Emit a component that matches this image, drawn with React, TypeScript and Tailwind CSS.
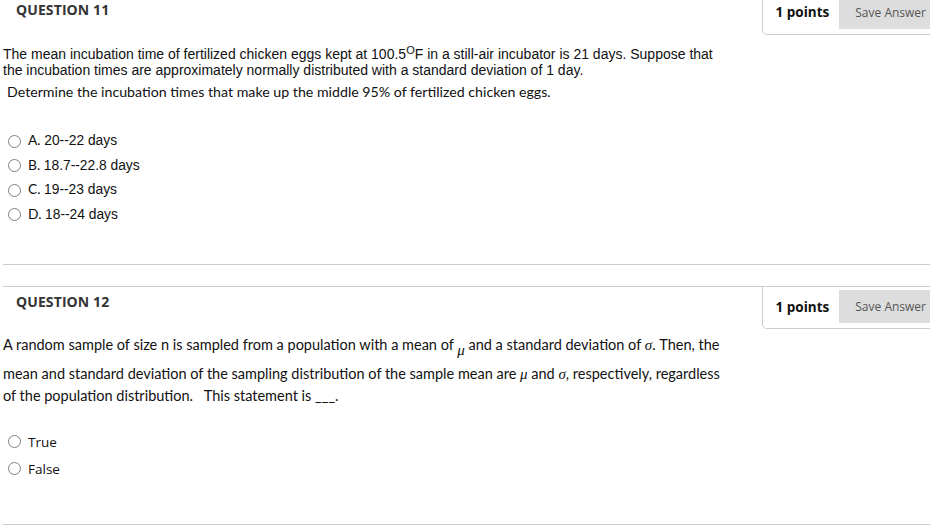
import React from 'react';

const openSans = { fontFamily: '"Open Sans", "Liberation Sans", sans-serif' };

const PointsBox: React.FC = () => (
  <div className="flex items-center border-x border-b border-[#cccccc] rounded-bl-[5px] pt-[3px] pb-[5px] pl-[13px] pr-[4px] bg-white">
    <span className="font-['Open_Sans',sans-serif] font-bold text-[13.5px] text-[#111] mr-[10px]">1 points</span>
    <span className="h-[33px] flex items-center bg-[#dddddd] px-[16px] font-['Open_Sans',sans-serif] text-[12px] text-[#555]">
      Save Answer
    </span>
  </div>
);

const Radio: React.FC = () => (
  <span className="inline-block w-[13px] h-[13px] rounded-full border border-[#808080] bg-white shrink-0" />
);

const QuestionHeader: React.FC<{ n: number; top: string }> = ({ n, top }) => (
  <header className="flex justify-between items-start">
    <h2 className={`pl-[13px] ${top} font-['Open_Sans',sans-serif] font-bold text-[14px] text-[#333] tracking-[0.1px]`}>
      QUESTION {n}
    </h2>
    <PointsBox />
  </header>
);

const Mu = () => <i className="font-['Liberation_Serif',serif] text-[15px]">μ</i>;
const Sigma = () => <i className="font-['Liberation_Serif',serif] text-[15px]">σ</i>;

export default function App() {
  const options11 = [
    ['A.', '20--22 days'],
    ['B.', '18.7--22.8 days'],
    ['C.', '19--23 days'],
    ['D.', '18--24 days'],
  ];

  return (
    <div className="w-[930px] h-[531px] overflow-hidden bg-white">
      <div className="w-[944px] ml-[3px] -mt-[8px]">
        {/* Question 11 */}
        <section className="border-t border-b border-[#cccccc]">
          <QuestionHeader n={11} top="pt-[6px]" />
          <div className="mt-[11px] font-['Liberation_Sans',Arial,sans-serif] text-[14px] leading-[16px] text-[#111]">
            The mean incubation time of fertilized chicken eggs kept at 100.5<sup className="text-[11px]">O</sup>F in a
            still-air incubator is 21 days. Suppose that
            <br />
            the incubation times are approximately normally distributed with a standard deviation of 1 day.
          </div>
          <p className="mt-[3px] pl-[4px] font-['Lato',sans-serif] text-[14.2px] text-[#111]">
            Determine the incubation times that make up the middle 95% of fertilized chicken eggs.
          </p>

          <ul className="mt-[29px] pb-[40px] flex flex-col gap-[5px]">
            {options11.map(([letter, text]) => (
              <li key={letter} className="flex items-center h-[19.5px] pl-[5px]">
                <Radio />
                <span className="ml-[7px] text-[13.8px] text-[#111]">
                  <span className="font-['Lato',sans-serif]">{letter}</span>{' '}
                  <span className="font-['Liberation_Sans',Arial,sans-serif]">{text}</span>
                </span>
              </li>
            ))}
          </ul>
        </section>

        {/* Question 12 */}
        <section className="mt-[21px] border-t border-b border-[#cccccc]">
          <QuestionHeader n={12} top="pt-[4px]" />
          <div className="font-['Lato',sans-serif] text-[14.5px] text-[#111]">
            <p className="leading-[32px] pb-[2px]">
              A random sample of size n is sampled from a population with a mean of{' '}
              <span className="relative top-[5px]"><Mu /></span> and a standard deviation of <Sigma />. Then, the
            </p>
            <p className="leading-[22px]">
              mean and standard deviation of the sampling distribution of the sample mean are <Mu /> and <Sigma />,
              respectively, regardless
              <br />
              of the population distribution.&nbsp;&nbsp; This statement is ___.
            </p>
          </div>

          <ul className="mt-[25px] pb-[46px] flex flex-col gap-[8px]" style={openSans}>
            {['True', 'False'].map((t) => (
              <li key={t} className="flex items-center h-[19px] pl-[5px]">
                <Radio />
                <span className="ml-[7px] text-[13.5px] text-[#111]">{t}</span>
              </li>
            ))}
          </ul>
        </section>
      </div>
    </div>
  );
}
